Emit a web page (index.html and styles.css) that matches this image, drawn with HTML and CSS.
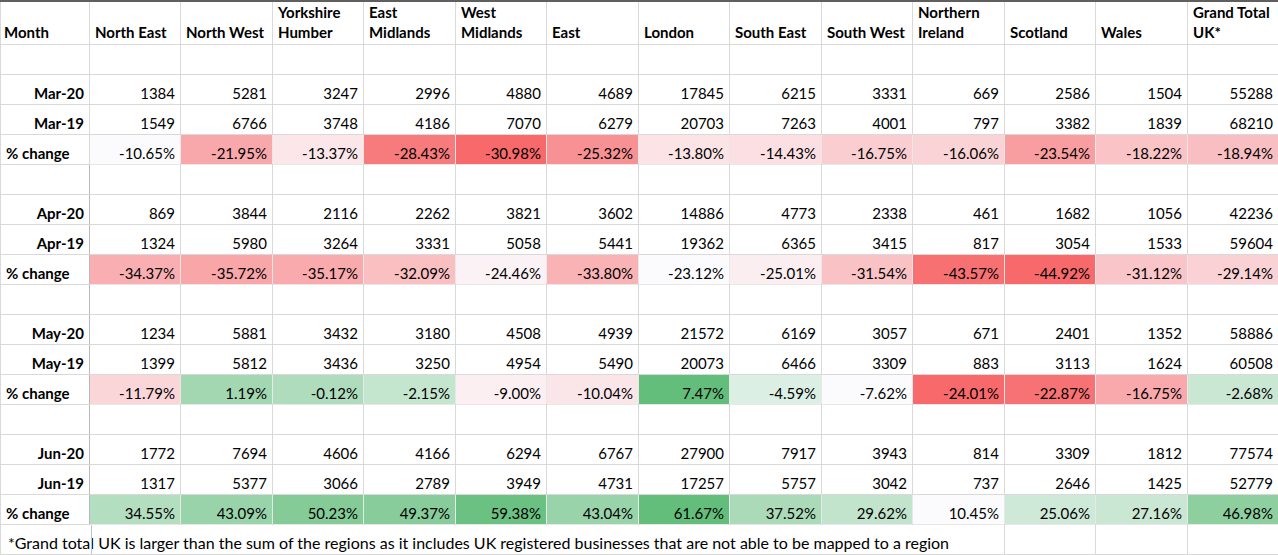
FILE: index.html
```html
<!DOCTYPE html>
<html lang="en">
<head>
<meta charset="utf-8">
<title>Regional comparison</title>
<link rel="stylesheet" href="styles.css">
</head>
<body>
<table class="sheet">
<colgroup>
<col class="c0"><col class="ca"><col class="cb"><col class="ca"><col class="cb"><col class="ca"><col class="cb"><col class="ca"><col class="cb"><col class="ca"><col class="cb"><col class="ca"><col class="cb"><col class="ca">
</colgroup>
<thead>
<tr class="hdr">
<th>Month</th><th>North East</th><th>North West</th><th>Yorkshire<br>Humber</th><th>East<br>Midlands</th><th>West<br>Midlands</th><th>East</th><th>London</th><th>South East</th><th>South West</th><th>Northern<br>Ireland</th><th>Scotland</th><th>Wales</th><th>Grand Total<br>UK*</th>
</tr>
</thead>
<tbody>
<tr class="blank"><td></td><td></td><td></td><td></td><td></td><td></td><td></td><td></td><td></td><td></td><td></td><td></td><td></td><td></td></tr>
<tr><th class="mon">Mar-20</th><td>1384</td><td>5281</td><td>3247</td><td>2996</td><td>4880</td><td>4689</td><td>17845</td><td>6215</td><td>3331</td><td>669</td><td>2586</td><td>1504</td><td>55288</td></tr>
<tr><th class="mon">Mar-19</th><td>1549</td><td>6766</td><td>3748</td><td>4186</td><td>7070</td><td>6279</td><td>20703</td><td>7263</td><td>4001</td><td>797</td><td>3382</td><td>1839</td><td>68210</td></tr>
<tr class="pct"><th class="lbl">% change</th>
<td style="background:rgb(251,251,254)">-10.65%</td>
<td style="background:rgb(248,168,171)">-21.95%</td>
<td style="background:rgb(251,230,233)">-13.37%</td>
<td style="background:rgb(247,122,125)">-28.43%</td>
<td style="background:rgb(247,105,107)">-30.98%</td>
<td style="background:rgb(248,145,148)">-25.32%</td>
<td style="background:rgb(251,227,230)">-13.80%</td>
<td style="background:rgb(251,223,226)">-14.43%</td>
<td style="background:rgb(250,206,209)">-16.75%</td>
<td style="background:rgb(250,211,214)">-16.06%</td>
<td style="background:rgb(248,158,160)">-23.54%</td>
<td style="background:rgb(250,195,198)">-18.22%</td>
<td style="background:rgb(249,190,193)">-18.94%</td>
</tr>
<tr class="blank dk"><td></td><td></td><td></td><td></td><td></td><td></td><td></td><td></td><td></td><td></td><td></td><td></td><td></td><td></td></tr>
<tr class="dk"><th class="mon">Apr-20</th><td>869</td><td>3844</td><td>2116</td><td>2262</td><td>3821</td><td>3602</td><td>14886</td><td>4773</td><td>2338</td><td>461</td><td>1682</td><td>1056</td><td>42236</td></tr>
<tr class="dk"><th class="mon">Apr-19</th><td>1324</td><td>5980</td><td>3264</td><td>3331</td><td>5058</td><td>5441</td><td>19362</td><td>6365</td><td>3415</td><td>817</td><td>3054</td><td>1533</td><td>59604</td></tr>
<tr class="pct dk"><th class="lbl">% change</th>
<td style="background:rgb(249,175,178)">-34.37%</td>
<td style="background:rgb(248,166,168)">-35.72%</td>
<td style="background:rgb(249,170,172)">-35.17%</td>
<td style="background:rgb(249,191,193)">-32.09%</td>
<td style="background:rgb(251,242,245)">-24.46%</td>
<td style="background:rgb(249,179,181)">-33.80%</td>
<td style="background:rgb(251,251,254)">-23.12%</td>
<td style="background:rgb(251,238,241)">-25.01%</td>
<td style="background:rgb(249,194,197)">-31.54%</td>
<td style="background:rgb(247,113,115)">-43.57%</td>
<td style="background:rgb(247,105,107)">-44.92%</td>
<td style="background:rgb(250,197,200)">-31.12%</td>
<td style="background:rgb(250,210,213)">-29.14%</td>
</tr>
<tr class="blank dk"><td></td><td></td><td></td><td></td><td></td><td></td><td></td><td></td><td></td><td></td><td></td><td></td><td></td><td></td></tr>
<tr class="dk"><th class="mon">May-20</th><td>1234</td><td>5881</td><td>3432</td><td>3180</td><td>4508</td><td>4939</td><td>21572</td><td>6169</td><td>3057</td><td>671</td><td>2401</td><td>1352</td><td>58886</td></tr>
<tr class="dk"><th class="mon">May-19</th><td>1399</td><td>5812</td><td>3436</td><td>3250</td><td>4954</td><td>5490</td><td>20073</td><td>6466</td><td>3309</td><td>883</td><td>3113</td><td>1624</td><td>60508</td></tr>
<tr class="pct dk"><th class="lbl">% change</th>
<td style="background:rgb(250,214,216)">-11.79%</td>
<td style="background:rgb(162,215,177)">1.19%</td>
<td style="background:rgb(175,220,188)">-0.12%</td>
<td style="background:rgb(196,229,206)">-2.15%</td>
<td style="background:rgb(251,239,242)">-9.00%</td>
<td style="background:rgb(250,229,232)">-10.04%</td>
<td style="background:rgb(99,190,123)">7.47%</td>
<td style="background:rgb(220,239,228)">-4.59%</td>
<td style="background:rgb(251,251,254)">-7.62%</td>
<td style="background:rgb(247,105,107)">-24.01%</td>
<td style="background:rgb(247,114,116)">-22.87%</td>
<td style="background:rgb(249,169,172)">-16.75%</td>
<td style="background:rgb(201,231,211)">-2.68%</td>
</tr>
<tr class="blank dk"><td></td><td></td><td></td><td></td><td></td><td></td><td></td><td></td><td></td><td></td><td></td><td></td><td></td><td></td></tr>
<tr class="dk"><th class="mon">Jun-20</th><td>1772</td><td>7694</td><td>4606</td><td>4166</td><td>6294</td><td>6767</td><td>27900</td><td>7917</td><td>3943</td><td>814</td><td>3309</td><td>1812</td><td>77574</td></tr>
<tr class="dk"><th class="mon">Jun-19</th><td>1317</td><td>5377</td><td>3066</td><td>2789</td><td>3949</td><td>4731</td><td>17257</td><td>5757</td><td>3042</td><td>737</td><td>2646</td><td>1425</td><td>52779</td></tr>
<tr class="pct dk"><th class="lbl">% change</th>
<td style="background:rgb(179,222,192)">34.55%</td>
<td style="background:rgb(153,211,170)">43.09%</td>
<td style="background:rgb(132,203,151)">50.23%</td>
<td style="background:rgb(135,204,154)">49.37%</td>
<td style="background:rgb(106,193,129)">59.38%</td>
<td style="background:rgb(153,211,170)">43.04%</td>
<td style="background:rgb(99,190,123)">61.67%</td>
<td style="background:rgb(170,218,184)">37.52%</td>
<td style="background:rgb(194,228,205)">29.62%</td>
<td style="background:rgb(251,251,254)">10.45%</td>
<td style="background:rgb(207,233,216)">25.06%</td>
<td style="background:rgb(201,231,210)">27.16%</td>
<td style="background:rgb(142,207,160)">46.98%</td>
</tr>
<tr class="note"><td class="note-text" colspan="11">*Grand total UK is larger than the sum of the regions as it includes UK registered businesses that are not able to be mapped to a region</td><td></td><td></td><td></td></tr>
<tr class="blank"><td></td><td></td><td></td><td></td><td></td><td></td><td></td><td></td><td></td><td></td><td></td><td></td><td></td><td></td></tr>
</tbody>
</table>
</body>
</html>
```
FILE: styles.css
```css
html, body {
  margin: 0;
  padding: 0;
  overflow: hidden;
  background: #ffffff;
}

.sheet {
  width: 1278px;
  table-layout: fixed;
  border-collapse: collapse;
  font-family: Lato, "Liberation Sans", sans-serif;
  font-size: 15px;
  line-height: 20px;
  color: #000;
  border-top: 2px solid #5f5f5f;
}

.c0 { width: 89px; }
.ca { width: 91px; }
.cb { width: 92px; }

.sheet th,
.sheet td {
  border: 1px solid #d9d9d9;
  padding: 0 5px 1px 5px;
  vertical-align: bottom;
  white-space: nowrap;
  overflow: hidden;
}

.sheet td {
  text-align: right;
  font-weight: 400;
}

.sheet tr {
  height: 30px;
}

.sheet .hdr {
  height: 42px;
}

.hdr th {
  text-align: left;
  font-weight: 700;
  padding-bottom: 2px;
  border-top: none;
}

.hdr th:first-child {
  padding-left: 3px;
}

.mon {
  text-align: right;
  font-weight: 700;
}

.lbl {
  text-align: left;
  font-weight: 700;
  padding-left: 3px;
}

.pct td {
  border-color: rgba(0, 0, 0, 0.09);
}

.dk > :first-child {
  border-right-color: #b9b9b9;
}

.note td {
  border-top-color: #d9d9d9;
}

.note .note-text {
  position: relative;
  text-align: left;
  padding-left: 7px;
  font-size: 16px;
  overflow: visible;
  border-right-color: #d9d9d9;
}

.note .note-text::after {
  content: "";
  position: absolute;
  left: 90px;
  top: 0;
  bottom: 0;
  border-left: 1px solid #c4c4c4;
}
```
